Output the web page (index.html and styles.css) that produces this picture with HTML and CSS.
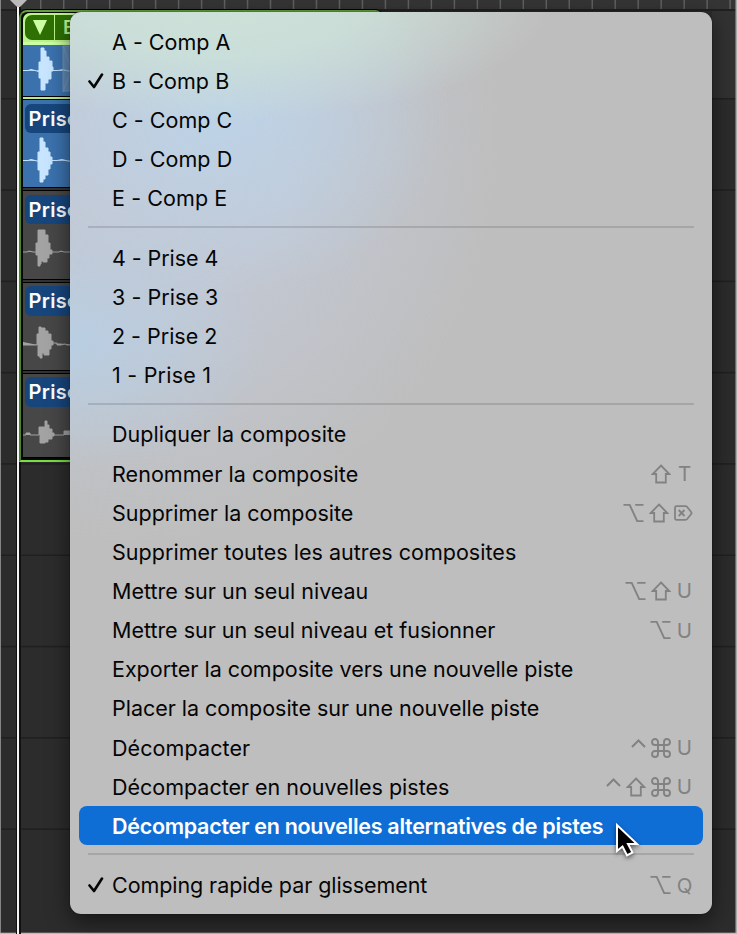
FILE: index.html
```html
<!DOCTYPE html>
<html lang="fr">
<head>
<meta charset="utf-8">
<title>Menu de prises</title>
<link rel="stylesheet" href="styles.css">
</head>
<body>
<svg class="defs" width="0" height="0" aria-hidden="true">
  <symbol id="check" viewBox="0 0 16 18"><path d="M1.5 9.5 6 15 14 2.5" fill="none" stroke="currentColor" stroke-width="2.6" stroke-linecap="round" stroke-linejoin="round"/></symbol>
  <symbol id="shift" viewBox="0 0 20 20"><path d="M10 1.500 18.300 10H14.800V18.500H5.200V10H1.700Z" fill="none" stroke="currentColor" stroke-width="1.8"/></symbol>
  <symbol id="option" viewBox="0 0 21 20"><path d="M.5 1.9H6.7L14.2 18.100H20.5M12.2 1.9H20.5" fill="none" stroke="currentColor" stroke-width="1.9"/></symbol>
  <symbol id="ctrl" viewBox="0 0 15 20"><path d="M1 9 7.5 2.5 14 9" fill="none" stroke="currentColor" stroke-width="2"/></symbol>
  <symbol id="cmd" viewBox="0 0 20 20"><path d="M7 7V4A3 3 0 1 0 4 7H16A3 3 0 1 0 13 4V16A3 3 0 1 0 16 13H4A3 3 0 1 0 7 16Z" fill="none" stroke="currentColor" stroke-width="1.9"/></symbol>
  <symbol id="del" viewBox="0 0 19 20"><path d="M2.5 3.2H11.5Q12.5 3.2 13.2 4L17 8.8Q18 10 17 11.2L13.2 16Q12.5 16.8 11.5 16.8H2.5Q1 16.8 1 15.3V4.7Q1 3.2 2.5 3.2ZM4.700 7 10.500 13M10.500 7 4.700 13" fill="none" stroke="currentColor" stroke-width="1.8"/></symbol>
</svg>
<main class="stage">
  <svg class="grid" id="grid" width="737" height="934"></svg>
  <section class="tracks">
    <div class="folder"><div class="folder-head"><span class="tri"></span><span class="comp">B</span></div>
      <svg class="wave" width="60" height="50" viewBox="23 45 60 50"><path class="w" d="M23 70.500H28L31 69.500 37 71H39V62H41V48H44V51H46V57H49V61H52V67H53V71H51V79H48V83H45V90H41V78H39V71H37M53 70.5H58L63 69.5 68 71H80"/><path class="fade" d="M63 46V91H80V46ZM63 46 80 92M63 92 80 46"/></svg></div>
    <div class="take on"><span class="name">Prise 4</span>
      <svg class="wave" width="60" height="52" viewBox="23 134 60 52"><path class="w" d="M23 161.5H28L31 160.500 37 162H38V153H40V139H43V143H45V149H48V153H50V158H52V165H50V170H48V176H45V180H43V183H40V171H38V162M52 161.500H57L62 160.500 68 162H80"/></svg></div>
    <div class="take"><span class="name">Prise 3</span>
      <svg class="wave" width="60" height="52" viewBox="23 225 60 52"><path class="w" d="M23 253H27L29 252 33 253H36V244H38V231H45V236H48V244H50V251H52V255H49V259H47V263H43V262H41V265H40V267H38V256H36V253M52 253H59L61 252 64 253H80"/></svg></div>
    <div class="take"><span class="name">Prise 2</span>
      <svg class="wave" width="60" height="52" viewBox="23 316 60 52"><path class="w" d="M23 342V345H37V334H39V327H41V328H45V331H48V334H51V341H53V345H51V349H49V355H44V353H42V358H40V356H38V345M53 343H57V345H61L65 344 67 345H80"/></svg></div>
    <div class="take last"><span class="name">Prise 1</span>
      <svg class="wave" width="60" height="50" viewBox="23 408 60 50"><path class="w" d="M23 436H26V434H30V436H39V428H45V422H47V426H49V430H52V434H54V437H52V440H48V443H45V444H40V436M54 436H64V432H70V436H80"/></svg></div>
  </section>
  <nav class="menu" id="menu"></nav>
  <svg class="cursor" width="30" height="40" viewBox="612 820 30 40"><path d="M617 825V851L622.500 846.500 627 855.300 632.500 852.500 628 844H637Z"/></svg>
</main>
<script src="menu.js"></script>
</body>
</html>
```
FILE: styles.css
```css
body { margin: 0; font-family: Inter, "Liberation Sans", sans-serif; }
.defs { position: absolute; }
.stage { position: relative; width: 737px; height: 934px; overflow: hidden; background: #2c2c2c; }
.grid { position: absolute; inset: 0; }
.tracks { position: absolute; left: 19px; top: 10px; width: 364px; height: 451.500px; box-sizing: border-box; border: 2px solid #659f3f; border-bottom-color: #79df42; border-left-color: #4b8429; border-radius: 8px 8px 0 0; background: #080808; overflow: hidden; display: flex; flex-direction: column; box-shadow: 0 -1px 0 #000; }
.folder { flex: none; height: 84px; margin: 1px 0 0 2px; background: #3b72ae; border-bottom: 1px solid #000; box-sizing: border-box; border-radius: 7px 0 0 0; overflow: hidden; }
.folder-head { height: 32px; padding: 2px 0 0 2px; background: #bdf38d; box-sizing: border-box; border-bottom: 3px solid #c9ffa0; display: flex; color: #bdf38d; }
.tri { width: 29px; height: 25px; border-radius: 7px 0 0 7px; background: #2e7004; border-right: 1px solid #bdf38d; display: flex; align-items: center; justify-content: center; }
.tri::before { content: ""; border: 7.500px solid transparent; border-top: 15px solid #cdffa5; border-bottom: 0; }
.comp { flex: 1; height: 25px; padding-left: 8px; background: #2e7004; font: 600 19px/25px Inter, sans-serif; }
.take { flex: none; height: 91.250px; margin-left: 2px; border-top: 2px solid #333; border-bottom: 1.500px solid #000; background: #474747; box-sizing: border-box; display: flex; flex-direction: column; box-shadow: inset 0 1px 0 #000; }
.take.on { background: #3b72ae; border-top-color: #b8e990; }
.take.last { height: 87px; }
.name { flex: none; height: 29.500px; margin: 4.500px 0 0 2px; padding-left: 3.500px; border-radius: 6px; background: #17467d; color: #fff; font: 600 20px/30.500px Inter, sans-serif; letter-spacing: .3px; }
.wave { display: block; flex: none; }
.w { fill: #a3a3a3; stroke: #a3a3a3; stroke-width: 1; }
.folder .w, .on .w { fill: #c8e5ff; stroke: #c8e5ff; }
.fade { fill: #83a0c0; fill-opacity: .5; stroke: #7595b8; }
.menu { position: absolute; left: 69.500px; top: 12px; width: 642.500px; height: 901.500px; box-sizing: border-box; padding: 10.200px 9.500px 0; border-radius: 11px; background:
  radial-gradient(ellipse 330px 120px at 150px -10px, #cde2d8 0%, #cde2d8cc 45%, #cde2d800 100%),
  radial-gradient(ellipse 230px 180px at 150px 105px, #bdd3e7 0%, #bdd3e700 100%),
  radial-gradient(ellipse 200px 130px at 0 330px, #b9cee2 0%, #b9cee200 100%),
  radial-gradient(ellipse 370px 410px at 60px 120px, #c3c9d5 0%, #c3c9d5dd 45%, #bebebe00 100%), #bebebe;
  box-shadow: 0 0 1px #000, 0 7px 22px #0008; }
.row { display: flex; align-items: center; height: 39.150px; box-sizing: border-box; padding: 0 10px 0 8.500px; border-radius: 8px; color: #050505; font-size: 21.500px; white-space: nowrap; }
.mark { width: 24.500px; height: 18px; flex: none; display: flex; }
.label { display: block; }
.keys { margin-left: auto; display: flex; align-items: center; gap: 5px; color: #828282; }
.letter { width: 16px; text-align: center; margin-left: 1px; font-size: 20.500px; }
.selected { background: #0f6dd6; color: #fff; font-weight: 600; }
.sep { height: 20.200px; padding: 8px 9px 0 8.500px; box-sizing: border-box; }
.sep::before { content: ""; display: block; height: 2px; background: #00000020; }
.cursor { position: absolute; left: 612px; top: 820px; fill: #000; stroke: #fff; stroke-width: 2; filter: drop-shadow(0 2px 2px #0008); }
```
FILE: menu.js
```js
// Label, text width in pixels, shortcut keys, state.
const items = [
  ["A - Comp A", 118], ["B - Comp B", 117, "", "on"], ["C - Comp C", 120], ["D - Comp D", 120], ["E - Comp E", 115], null,
  ["4 - Prise 4", 106], ["3 - Prise 3", 106], ["2 - Prise 2", 105], ["1 - Prise 1", 99], null,
  ["Dupliquer la composite", 234], ["Renommer la composite", 246, "shift T"], ["Supprimer la composite", 241, "option shift del"],
  ["Supprimer toutes les autres composites", 404], ["Mettre sur un seul niveau", 256, "option shift U"],
  ["Mettre sur un seul niveau et fusionner", 383, "option U"], ["Exporter la composite vers une nouvelle piste", 461],
  ["Placer la composite sur une nouvelle piste", 427], ["Décompacter", 138, "ctrl cmd U"],
  ["Décompacter en nouvelles pistes", 337, "ctrl shift cmd U"],
  ["Décompacter en nouvelles alternatives de pistes", 491, "", "selected"], null,
  ["Comping rapide par glissement", 315, "option Q", "on"]
];
const widths = { shift: 20, option: 21, ctrl: 15, cmd: 20, del: 19, check: 16 };
const icon = n => `<svg width="${widths[n]}" height="${n === "check" ? 18 : 20}"><use href="#${n}"/></svg>`;
document.getElementById("menu").innerHTML = items.map(i => {
  if (!i) return '<div class="sep"></div>';
  const [text, w, keys, state] = i;
  const k = keys ? keys.split(" ").map(n => widths[n] ? icon(n) : `<span class="letter">${n}</span>`).join("") : "";
  return `<div class="row ${state || ""}"><span class="mark">${state === "on" ? icon("check") : ""}</span><span class="label" data-w="${w}">${text}</span><span class="keys">${k}</span></div>`;
}).join("");
for (const el of document.querySelectorAll(".label")) {
  const extra = (Number(el.dataset.w) + .3 - el.getBoundingClientRect().width) / el.textContent.length;
  el.style.letterSpacing = extra + "px";
}
// Timeline ruler, track dividers and playhead.
let g = '<rect width="737" height="9" fill="#353535"/><rect y="9" width="737" height="2" fill="#202020"/><rect x="712" y="11" width="25" height="88" fill="#323232"/>';
for (let i = 0; i < 32; i++) g += `<rect x="${17 + i * 22.98}" width="1.5" height="9" fill="#606060"/>`;
for (let i = 0; i < 9; i++) g += `<rect y="${98 + i * 91.3}" width="737" height="1.5" fill="#202020"/>`;
g += '<rect width="1" height="934" fill="#858585"/><rect x="735.5" width="1.5" height="934" fill="#aaa"/><rect y="932.7" width="737" height="1.3" fill="#bbb"/>';
g += '<rect x="16" width="5" height="934" fill="#111"/><rect x="17" width="2" height="934" fill="#f4f4f4"/><path d="M10 0H27L20 7H17Z" fill="#bbb"/>';
document.getElementById("grid").innerHTML = g;
```
